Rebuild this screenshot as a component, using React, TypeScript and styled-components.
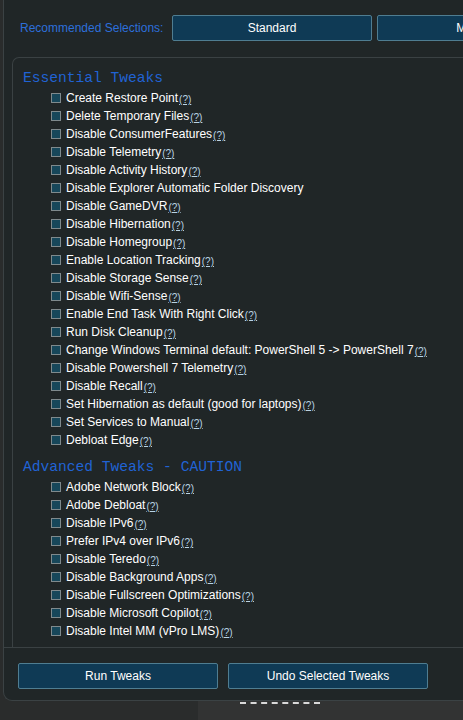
import styled, { createGlobalStyle } from 'styled-components';

const GlobalStyle = createGlobalStyle`
	html, body {
		margin: 0;
		padding: 0;
		background: #2a2c2c;
		overflow: hidden;
		width: 463px;
		height: 720px;
	}
	* {
		box-sizing: border-box;
	}
`;

const Page = styled.div`
	width: 463px;
	height: 720px;
	display: flex;
	flex-direction: column;
	overflow: hidden;
	font-family: 'Liberation Sans', Arial, sans-serif;
`;

// the window continues past the right edge of the frame, so it is clipped
const Window = styled.div`
	margin-left: 3px;
	width: 460px;
	height: 701px;
	background: #202627;
	border-left: 1px solid #3b4244;
	border-bottom: 1px solid #3b4244;
	border-bottom-left-radius: 9px;
	display: flex;
	flex-direction: column;
	flex-shrink: 0;
	overflow: hidden;
`;

const PresetBar = styled.div`
	display: flex;
	align-items: center;
	height: 57px;
	padding: 0 0 2px 16px;
`;

const PresetLabel = styled.span`
	color: #2d6fda;
	font-size: 12px;
	width: 152px;
	flex-shrink: 0;
	white-space: nowrap;
`;

const PresetButtons = styled.div`
	display: flex;
	gap: 5px;
	flex-shrink: 0;
`;

const BlueButton = styled.button`
	width: 200px;
	height: 26px;
	flex-shrink: 0;
	background: #0f3a55;
	border: 1px solid #4f7d91;
	border-radius: 2px;
	color: #ffffff;
	font-family: 'Liberation Sans', Arial, sans-serif;
	font-size: 12px;
	padding: 0;
	cursor: pointer;
`;

const TweaksBox = styled.div`
	margin-left: 8px;
	flex: 1;
	border-left: 1px solid #3a4143;
	border-top: 1px solid #3a4143;
	border-top-left-radius: 7px;
	padding: 10px 0 0 10px;
	display: flex;
	flex-direction: column;
	overflow: hidden;
`;

const SectionTitle = styled.h2<{ $gap?: number }>`
	margin: 0;
	height: 20px;
	line-height: 20px;
	font-family: 'Liberation Mono', 'DejaVu Sans Mono', monospace;
	font-weight: normal;
	font-size: 14.6px;
	color: #2063d4;
	margin-bottom: ${(p) => p.$gap ?? 0}px;
`;

const List = styled.ul`
	list-style: none;
	margin: 0 0 8px 0;
	padding: 0 0 0 28px;
`;

const Row = styled.li`
	display: flex;
	align-items: center;
	height: 18px;
	color: #ffffff;
	font-size: 12px;
	white-space: nowrap;
`;

const Box = styled.span`
	width: 10px;
	height: 10px;
	background: #17475a;
	border: 1px solid #7f8a8d;
	margin-right: 5px;
	flex-shrink: 0;
`;

const Help = styled.a`
	color: #b9d3e3;
	font-size: 10px;
	text-decoration: underline;
	margin-top: 3px;
	margin-left: 1px;
`;

const Footer = styled.div`
	height: 53px;
	border-top: 1px solid #3a4143;
	display: flex;
	gap: 10px;
	padding: 15px 0 0 14px;
	flex-shrink: 0;
`;

const Below = styled.div`
	flex: 1;
	display: flex;
`;

const BelowLeft = styled.div`
	width: 198px;
	background: #2a2c2c;
`;

const BelowRight = styled.div`
	flex: 1;
	background: #323333;
	padding: 1px 0 0 42px;
`;

const Dashes = styled.div`
	width: 80px;
	height: 0;
	border-top: 2px dashed #d9d9d9;
`;

const essential: [string, boolean][] = [
	['Create Restore Point', true],
	['Delete Temporary Files', true],
	['Disable ConsumerFeatures', true],
	['Disable Telemetry', true],
	['Disable Activity History', true],
	['Disable Explorer Automatic Folder Discovery', false],
	['Disable GameDVR', true],
	['Disable Hibernation', true],
	['Disable Homegroup', true],
	['Enable Location Tracking', true],
	['Disable Storage Sense', true],
	['Disable Wifi-Sense', true],
	['Enable End Task With Right Click', true],
	['Run Disk Cleanup', true],
	['Change Windows Terminal default: PowerShell 5 -> PowerShell 7', true],
	['Disable Powershell 7 Telemetry', true],
	['Disable Recall', true],
	['Set Hibernation as default (good for laptops)', true],
	['Set Services to Manual', true],
	['Debloat Edge', true],
];

const advanced: [string, boolean][] = [
	['Adobe Network Block', true],
	['Adobe Debloat', true],
	['Disable IPv6', true],
	['Prefer IPv4 over IPv6', true],
	['Disable Teredo', true],
	['Disable Background Apps', true],
	['Disable Fullscreen Optimizations', true],
	['Disable Microsoft Copilot', true],
	['Disable Intel MM (vPro LMS)', true],
];

function TweakList({ items }: { items: [string, boolean][] }) {
	return (
		<List>
			{items.map(([label, help]) => (
				<Row key={label}>
					<Box />
					{label}
					{help && <Help>(?)</Help>}
				</Row>
			))}
		</List>
	);
}

export default function App() {
	return (
		<>
			<GlobalStyle />
			<Page>
				<Window>
					<PresetBar>
						<PresetLabel>Recommended Selections:</PresetLabel>
						<PresetButtons>
							<BlueButton>Standard</BlueButton>
							<BlueButton>Minimal</BlueButton>
						</PresetButtons>
					</PresetBar>
					<TweaksBox>
						<SectionTitle $gap={1}>Essential Tweaks</SectionTitle>
						<TweakList items={essential} />
						<SectionTitle $gap={1}>Advanced Tweaks - CAUTION</SectionTitle>
						<TweakList items={advanced} />
					</TweaksBox>
					<Footer>
						<BlueButton>Run Tweaks</BlueButton>
						<BlueButton>Undo Selected Tweaks</BlueButton>
					</Footer>
				</Window>
				<Below>
					<BelowLeft />
					<BelowRight>
						<Dashes />
					</BelowRight>
				</Below>
			</Page>
		</>
	);
}
